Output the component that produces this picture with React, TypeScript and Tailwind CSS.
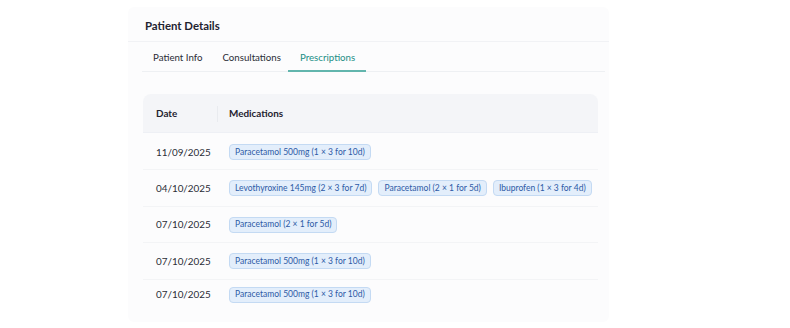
import React from "react";

const rows: { date: string; meds: string[] }[] = [
  { date: "11/09/2025", meds: ["Paracetamol 500mg (1 × 3 for 10d)"] },
  {
    date: "04/10/2025",
    meds: [
      "Levothyroxine 145mg (2 × 3 for 7d)",
      "Paracetamol (2 × 1 for 5d)",
      "Ibuprofen (1 × 3 for 4d)",
    ],
  },
  { date: "07/10/2025", meds: ["Paracetamol (2 × 1 for 5d)"] },
  { date: "07/10/2025", meds: ["Paracetamol 500mg (1 × 3 for 10d)"] },
  { date: "07/10/2025", meds: ["Paracetamol 500mg (1 × 3 for 10d)"] },
];

export default function App() {
  return (
    <div
      className="w-[790px] h-[328px] bg-white"
      style={{ fontFamily: "Lato, 'Open Sans', sans-serif" }}
    >
      <div className="ml-[128px] pt-[7px] w-[481px]">
        <div className="bg-[#fcfcfd] rounded-md h-[315px] flex flex-col">
          <div className="h-[35px] flex items-center pt-[3px] pl-[17px] border-b border-[#f1f2f5]">
            <span className="text-[11.4px] font-bold text-[#1f2330]">Patient Details</span>
          </div>
          <div className="flex h-[30px] ml-[14px] mr-[4px] border-b border-[#eef0f3] items-stretch text-[9.7px] text-[#2a2d36]">
            <div className="flex items-center pt-[1px] pl-[11px] pr-[11px]">Patient Info</div>
            <div className="flex items-center pt-[1px] pl-[9px] pr-[7px]">Consultations</div>
            <div className="flex items-center pt-[3px] pl-[12px] pr-[11px] text-[#1b8f86] border-b-2 border-[#62b5ad] -mb-px">
              Prescriptions
            </div>
          </div>
          <div className="ml-[15px] mr-[11px] mt-[22px]">
            <div className="flex h-[39px] bg-[#f4f5f8] rounded-t-lg border-b border-[#eef0f5]">
              <div className="w-[75px] flex items-center pl-[13px] text-[9.9px] font-bold text-[#1f2330] relative">
                Date
                <span className="absolute right-0 top-[12px] h-[16px] w-px bg-[#e9ebef]" />
              </div>
              <div className="flex items-center pl-[11px] text-[9.9px] font-bold text-[#1f2330]">Medications</div>
            </div>
            {rows.map((r, i) => (
              <div
                key={i}
                className={`flex items-center ${i === 4 ? "h-[29px] pt-[1px]" : i === 0 ? "h-[37px] pt-[2px]" : "h-[36.5px] pt-[1px]"} ${i < 4 ? "border-b border-[#f3f4f6]" : ""}`}
              >
                <div className="w-[75px] pl-[13px] text-[9.9px] text-[#2a2d36]">{r.date}</div>
                <div className="flex gap-[6px] pl-[11px]">
                  {r.meds.map((m, j) => (
                    <span
                      key={j}
                      className="px-[5px] h-[16px] flex items-center rounded-[4px] bg-[#e3eefb] border border-[#c4daf3] text-[8.5px] text-[#2d5aa6] whitespace-nowrap"
                    >
                      {m}
                    </span>
                  ))}
                </div>
              </div>
            ))}
          </div>
        </div>
      </div>
    </div>
  );
}
